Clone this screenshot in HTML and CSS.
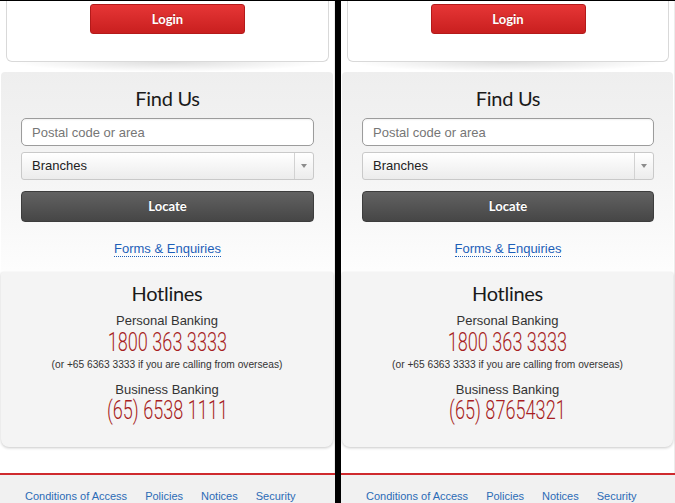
FILE: index.html
```html
<!DOCTYPE html>
<html lang="en">
<head>
<meta charset="utf-8">
<title>Find Us</title>
<link rel="stylesheet" href="styles.css">
</head>
<body>
<div class="screens">
  <div class="phone">
    <div class="login-card"><button class="btn-login">Login</button></div>
    <div class="card-shadow"></div>
    <section class="find">
      <h2 class="title">Find Us</h2>
      <input class="field" type="text" placeholder="Postal code or area">
      <div class="select"><span class="select-label">Branches</span><span class="select-arrow"></span></div>
      <button class="btn-locate">Locate</button>
      <a class="forms" href="#">Forms &amp; Enquiries</a>
    </section>
    <section class="hotlines">
      <h2 class="title">Hotlines</h2>
      <div class="label">Personal Banking</div>
      <div class="number-row"><span class="number">1800 363 3333</span></div>
      <div class="note">(or +65 6363 3333 if you are calling from overseas)</div>
      <div class="label label-business">Business Banking</div>
      <div class="number-row"><span class="number">(65) 6538 1111</span></div>
    </section>
    <footer class="footer">
      <a href="#">Conditions of Access</a>
      <a href="#">Policies</a>
      <a href="#">Notices</a>
      <a href="#">Security</a>
    </footer>
  </div>
  <div class="phone">
    <div class="login-card"><button class="btn-login">Login</button></div>
    <div class="card-shadow"></div>
    <section class="find">
      <h2 class="title">Find Us</h2>
      <input class="field" type="text" placeholder="Postal code or area">
      <div class="select"><span class="select-label">Branches</span><span class="select-arrow"></span></div>
      <button class="btn-locate">Locate</button>
      <a class="forms" href="#">Forms &amp; Enquiries</a>
    </section>
    <section class="hotlines">
      <h2 class="title">Hotlines</h2>
      <div class="label">Personal Banking</div>
      <div class="number-row"><span class="number">1800 363 3333</span></div>
      <div class="note">(or +65 6363 3333 if you are calling from overseas)</div>
      <div class="label label-business">Business Banking</div>
      <div class="number-row"><span class="number">(65) 87654321</span></div>
    </section>
    <footer class="footer">
      <a href="#">Conditions of Access</a>
      <a href="#">Policies</a>
      <a href="#">Notices</a>
      <a href="#">Security</a>
    </footer>
  </div>
</div>
</body>
</html>
```
FILE: styles.css
```css
* { box-sizing: border-box; }
html, body { margin: 0; padding: 0; }
body {
  background: #000;
  width: 675px;
  height: 503px;
  overflow: hidden;
  font-family: "Liberation Sans", Arial, sans-serif;
  color: #333;
}
.screens {
  display: flex;
  gap: 6px;
  padding-top: 1px;
  height: 503px;
}
.phone {
  flex: none;
  width: 335px;
  height: 502px;
  background: #fff;
  overflow: hidden;
  display: flex;
  flex-direction: column;
  box-shadow: inset -1px 0 0 #ececec;
}
.phone + .phone { width: 334px; }

.login-card {
  margin: 0 6px;
  border: 1px solid #d9d9d9;
  border-top: none;
  border-radius: 0 0 6px 6px;
  padding: 3px 0 27px;
  display: flex;
  justify-content: center;
  background: #fff;
}
.btn-login {
  width: 155px;
  height: 30px;
  border: 1px solid #b41a1a;
  border-radius: 3px;
  background: linear-gradient(#e63636, #c91f1f);
  color: #fff;
  font: 700 13px/1 "Lato", sans-serif;
  text-shadow: 0 -1px 0 rgba(0, 0, 0, 0.2);
  padding: 0;
}
.card-shadow {
  height: 10px;
  margin: 0 6px;
  background: radial-gradient(ellipse 48% 100% at 50% 0, rgba(0, 0, 0, 0.13), rgba(0, 0, 0, 0) 100%);
}

.find {
  margin: 0 2px 0 1px;
  padding: 14px 19px 13px 20px;
  border-radius: 4px 4px 0 0;
  background: linear-gradient(#eeeeee, #f5f5f5 55%, #fdfdfd);
  display: flex;
  flex-direction: column;
  text-align: center;
}
.title {
  margin: 0;
  font: 400 20px/24px "Lato", sans-serif;
  letter-spacing: -0.3px;
  color: #1a1a1a;
}
.field {
  display: block;
  width: 100%;
  height: 28px;
  margin-top: 8px;
  border: 1px solid #9c9c9c;
  border-radius: 5px;
  padding: 0 10px;
  font: 13px "Liberation Sans", Arial, sans-serif;
  color: #333;
  background: #fff;
  box-shadow: inset 0 1px 2px rgba(0, 0, 0, 0.06);
  outline: none;
}
.field::placeholder { color: #767676; }
.select {
  display: flex;
  height: 28px;
  margin-top: 6px;
  border: 1px solid #c9c9c9;
  border-radius: 3px;
  background: linear-gradient(#ffffff, #ececec);
}
.select-label {
  flex: 1;
  text-align: left;
  padding-left: 10px;
  font: 13px/26px "Liberation Sans", Arial, sans-serif;
  color: #222;
}
.select-arrow {
  width: 19px;
  border-left: 1px solid #d2d2d2;
  display: flex;
  align-items: center;
  justify-content: center;
}
.select-arrow::after {
  content: "";
  border-left: 3px solid transparent;
  border-right: 3px solid transparent;
  border-top: 4px solid #8c8c8c;
}
.btn-locate {
  height: 31px;
  margin-top: 11px;
  border: 1px solid #3d3d3d;
  border-radius: 4px;
  background: linear-gradient(#626262, #464646);
  color: #fff;
  font: 700 13px/1 "Lato", sans-serif;
  text-shadow: 0 -1px 0 rgba(0, 0, 0, 0.3);
  padding: 0;
}
.forms {
  align-self: center;
  margin-top: 19px;
  font: 13px/15px "Liberation Sans", Arial, sans-serif;
  color: #1d5fb8;
  text-decoration: none;
  border-bottom: 1px dotted #1d5fb8;
}

.hotlines {
  margin: 2px 2px 0 1px;
  padding: 9px 10px 24px;
  background: #f4f4f4;
  border-radius: 2px 2px 8px 8px;
  box-shadow: 0 1px 3px rgba(0, 0, 0, 0.22);
  display: flex;
  flex-direction: column;
  text-align: center;
}
.label {
  margin-top: 8px;
  font: 13px/15px "Liberation Sans", Arial, sans-serif;
  color: #333;
}
.label-business { margin-top: 11px; }
.number-row { height: 24px; margin-top: 2.5px; }
.number {
  display: inline-block;
  font: 300 25px/24px "Roboto", sans-serif;
  color: #a71d22;
  transform: scaleX(0.725);
  transform-origin: 50% 50%;
  white-space: nowrap;
}
.note {
  margin-top: 3px;
  font: 10.2px/13px "Liberation Sans", Arial, sans-serif;
  color: #333;
}

.footer {
  flex: 1;
  margin-top: 26px;
  border-top: 2px solid #cf2a2e;
  background: #f1f1f1;
  padding: 15px 0 0 25px;
  display: flex;
  align-items: flex-start;
  gap: 18px;
}
.footer a {
  font: 11px/13px "Liberation Sans", Arial, sans-serif;
  color: #2b6bb6;
  text-decoration: none;
  white-space: nowrap;
}
```
